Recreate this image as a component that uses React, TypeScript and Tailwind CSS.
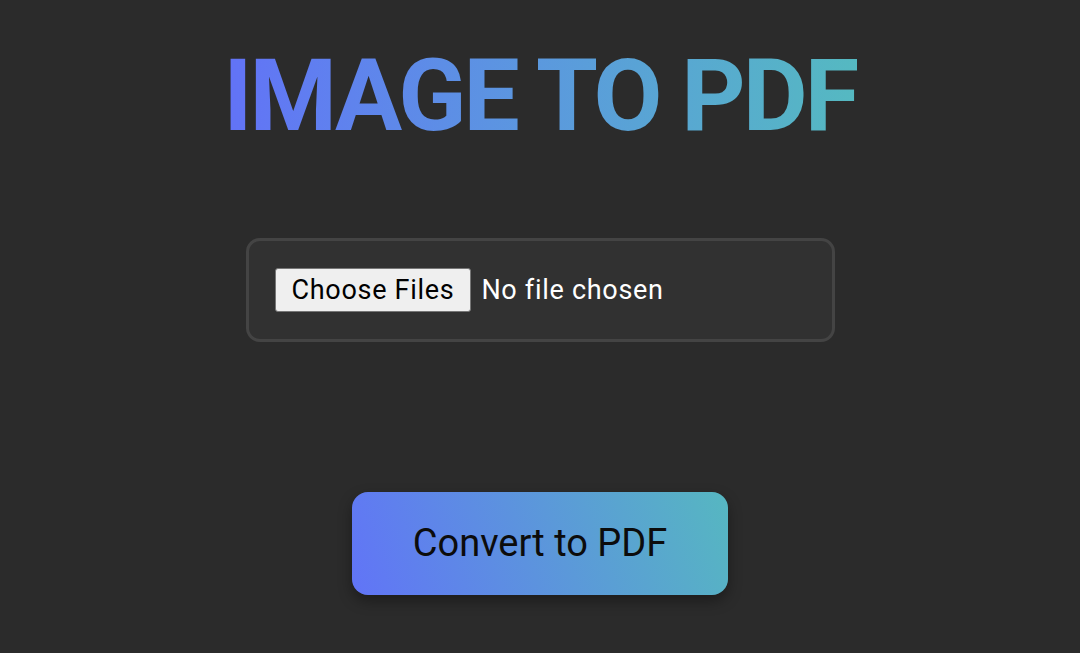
export default function App() {
  return (
    <div className="min-h-screen w-full bg-[#2b2b2b] flex flex-col items-center font-['Roboto',sans-serif]">
      <h1 className="mt-[38px] text-[100px] leading-[116px] font-bold tracking-[-3px] bg-gradient-to-r from-[#6272f7] to-[#55b9c1] bg-clip-text text-transparent">
        IMAGE TO PDF
      </h1>
      <div className="mt-[84px] w-[589px] h-[104px] rounded-[14px] border-[3px] border-[#444444] bg-[#313131] flex items-center pl-[26px]">
        <button className="h-[44px] px-[16px] bg-[#efefef] border border-[#767676] rounded-[3px] text-[27px] tracking-[0.7px] text-black leading-none">
          Choose Files
        </button>
        <span className="ml-[10px] text-[27px] tracking-[0.7px] text-white">No file chosen</span>
      </div>
      <button className="mt-[150px] w-[376px] h-[103px] rounded-[16px] bg-[linear-gradient(70deg,#6174f7,#56b7c1)] shadow-[0_6px_14px_rgba(0,0,0,0.35)] text-[38px] text-[#0c0c0c]">
        Convert to PDF
      </button>
    </div>
  );
}
